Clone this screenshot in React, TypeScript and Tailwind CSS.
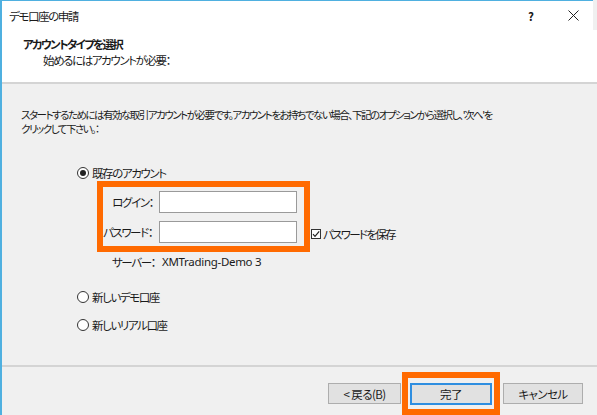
import { useState } from "react";

function Radio({ checked, label }: { checked?: boolean; label: string }) {
  return (
    <div className="flex items-center h-[14px]">
      <span className="w-[12px] h-[12px] rounded-full border border-[#333333] bg-white flex items-center justify-center">
        {checked && <span className="w-[6px] h-[6px] rounded-full bg-[#222222]" />}
      </span>
      <span className="ml-[3px]">{label}</span>
    </div>
  );
}

export default function App() {
  const [login, setLogin] = useState("");
  const [pass, setPass] = useState("");

  return (
    <div className="w-[597px] h-[415px] overflow-hidden bg-[#f0f0f0] border-l-2 border-[#4fb0e0] flex flex-col text-[11.5px] leading-[14px] text-[#1a1a1a] font-['Noto_Sans_CJK_JP','Noto_Sans',sans-serif] [font-feature-settings:'palt'] tracking-[-1.4px]">
      <div className="bg-white border-t border-[#4fb0e0] mr-[4px]">
        <div className="h-[29px] flex items-center pl-[7px]">
          <span>デモ口座の申請</span>
          <span className="ml-auto w-[14px] text-center font-bold tracking-normal">?</span>
          <svg className="ml-[30px] mr-[14px]" width="11" height="11" viewBox="0 0 11 11">
            <path d="M0.5 0.5L10.5 10.5M10.5 0.5L0.5 10.5" stroke="#222" strokeWidth="1" />
          </svg>
        </div>
      </div>
      <div className="bg-white h-[52px] pl-[21px] pt-[7px]">
        <div className="font-bold tracking-[-1.7px]">アカウントタイプを選択</div>
        <div className="pl-[20px] mt-[2px]">始めるにはアカウントが必要：</div>
      </div>
      <div className="h-[2px] bg-[#d4d4d4]" />

      <div className="flex-1 flex flex-col">
        <div className="pl-[19px] pt-[24px] whitespace-nowrap text-[10.5px] tracking-[-1.5px] leading-[14px]">
          <div>
            スタートするためには有効な取引アカウントが必要です。アカウントをお持ちでない場合、下記のオプションから選択し、'次へ'を
          </div>
          <div>クリックして下さい。：</div>
        </div>

        <div className="pl-[75px] mt-[30px]">
          <Radio checked label="既存のアカウント" />
        </div>

        <div className="flex items-end pl-[95px] mt-[1px]">
          <div className="border-[6px] border-[#ff6a00] w-[213px] pt-[4px] pb-[3px] pr-[7px] flex flex-col gap-[8px]">
            <div className="flex items-center">
              <span className="w-[50px] text-right whitespace-nowrap">ログイン：</span>
              <input
                value={login}
                onChange={(e) => setLogin(e.target.value)}
                className="ml-[6px] flex-1 h-[22px] bg-white border border-[#9a9a9a] outline-none px-1"
              />
            </div>
            <div className="flex items-center">
              <span className="w-[50px] whitespace-nowrap">パスワード：</span>
              <input
                type="password"
                value={pass}
                onChange={(e) => setPass(e.target.value)}
                className="ml-[6px] flex-1 h-[22px] bg-white border border-[#9a9a9a] outline-none px-1"
              />
            </div>
          </div>
          <div className="flex items-center mb-[11px] ml-[1px] whitespace-nowrap tracking-[-1.7px]">
            <svg width="10" height="10" viewBox="0 0 10 10">
              <rect x="0.5" y="0.5" width="9" height="9" fill="white" stroke="#333" />
              <path d="M2 5.2L4 7.3L8.2 2.3" fill="none" stroke="#222" strokeWidth="1.2" />
            </svg>
            <span className="ml-[2px]">パスワードを保存</span>
          </div>
        </div>

        <div className="flex pl-[110px] mt-[3px] whitespace-nowrap">
          <span className="w-[50px]">サーバー：</span>
          <span className="font-['Noto_Sans',sans-serif] tracking-[-0.3px]">XMTrading-Demo 3</span>
        </div>

        <div className="pl-[75px] mt-[21px] flex flex-col gap-[14px]">
          <Radio label="新しいデモ口座" />
          <Radio label="新しいリアル口座" />
        </div>
      </div>

      <div className="h-[2px] bg-[#d4d4d4]" />
      <div className="h-[48px] flex items-start justify-end pr-[14px] pt-[5px] tracking-[-0.6px]">
        <button className="mt-[11px] w-[73px] h-[21px] bg-[#e1e1e1] border border-[#adadad]">
          &lt; 戻る(B)
        </button>
        <div className="ml-[1px] border-[6px] border-[#ff6a00] px-[2px] pt-[5px] pb-[4px]">
          <button className="w-[82px] h-[22px] bg-[#e1e1e1] border-2 border-[#2f8ee0]">完了</button>
        </div>
        <button className="mt-[11px] ml-[3px] w-[80px] h-[21px] bg-[#e1e1e1] border border-[#adadad]">
          キャンセル
        </button>
      </div>
    </div>
  );
}
